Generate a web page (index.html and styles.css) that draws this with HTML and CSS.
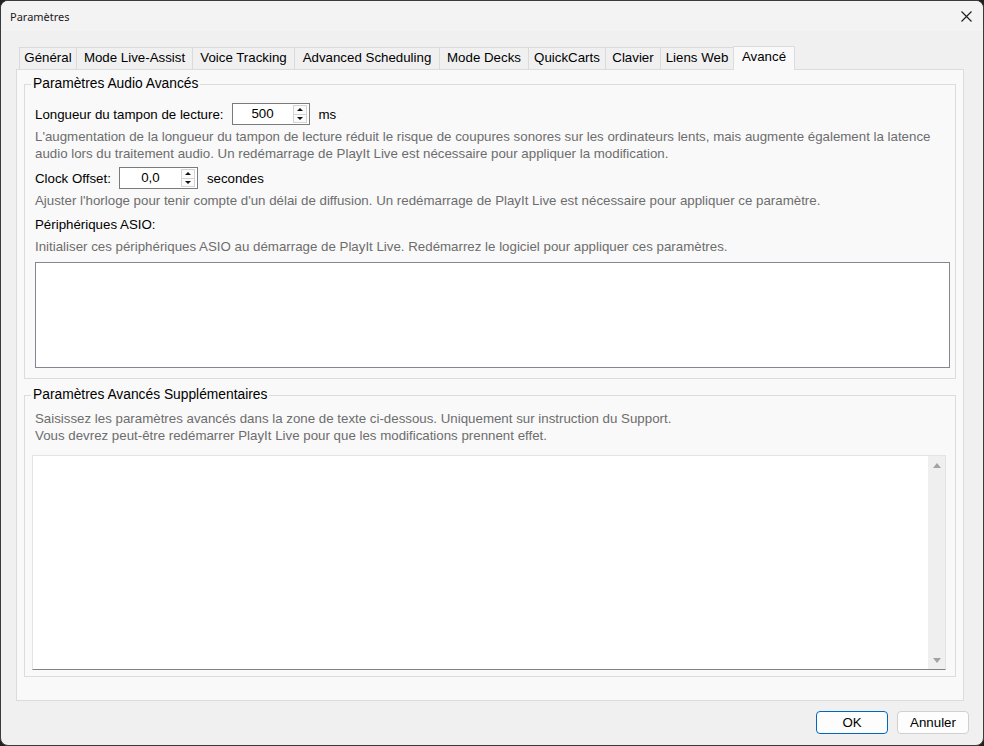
FILE: index.html
```html
<!DOCTYPE html>
<html lang="fr">
  <head>
    <meta charset="UTF-8" />
    <title>Paramètres</title>
    <link rel="stylesheet" href="styles.css">
  </head>
  <body>
    <div class="window">
      <div class="titlebar">
        <span class="title">Paramètres</span>
        <svg class="close" width="11" height="11" viewBox="0 0 11 11">
          <path d="M0.5 0.5 L10.5 10.5 M10.5 0.5 L0.5 10.5" stroke="#1b1b1b" stroke-width="1.1" fill="none" />
        </svg>
      </div>

      <div class="content">
        <div class="tabs">
          <div class="tab tab-general">Général</div>
          <div class="tab tab-live">Mode Live-Assist</div>
          <div class="tab tab-voice">Voice Tracking</div>
          <div class="tab tab-sched">Advanced Scheduling</div>
          <div class="tab tab-decks">Mode Decks</div>
          <div class="tab tab-carts">QuickCarts</div>
          <div class="tab tab-keys">Clavier</div>
          <div class="tab tab-links">Liens Web</div>
          <div class="tab tab-active">Avancé</div>
        </div>

        <div class="panel">
          <fieldset class="group group-audio">
            <legend>Paramètres Audio Avancés</legend>

            <div class="row row-buffer">
              <span class="label">Longueur du tampon de lecture:</span>
              <div class="spin spin-buffer">
                <span class="spin-value">500</span>
                <div class="spin-btns">
                  <span class="spin-btn"><i class="arrow-up"></i></span>
                  <span class="spin-btn"><i class="arrow-down"></i></span>
                </div>
              </div>
              <span class="unit">ms</span>
            </div>
            <p class="hint hint-buffer">L'augmentation de la longueur du tampon de lecture réduit le risque de coupures sonores sur les ordinateurs lents, mais augmente également la latence<br>audio lors du traitement audio. Un redémarrage de PlayIt Live est nécessaire pour appliquer la modification.</p>

            <div class="row row-clock">
              <span class="label">Clock Offset:</span>
              <div class="spin spin-clock">
                <span class="spin-value">0,0</span>
                <div class="spin-btns">
                  <span class="spin-btn"><i class="arrow-up"></i></span>
                  <span class="spin-btn"><i class="arrow-down"></i></span>
                </div>
              </div>
              <span class="unit">secondes</span>
            </div>
            <p class="hint hint-clock">Ajuster l'horloge pour tenir compte d'un délai de diffusion. Un redémarrage de PlayIt Live est nécessaire pour appliquer ce paramètre.</p>

            <div class="asio-label">Périphériques ASIO:</div>
            <p class="hint hint-asio">Initialiser ces périphériques ASIO au démarrage de PlayIt Live. Redémarrez le logiciel pour appliquer ces paramètres.</p>
            <div class="listbox"></div>
          </fieldset>

          <fieldset class="group group-extra">
            <legend>Paramètres Avancés Supplémentaires</legend>
            <p class="hint hint-extra">Saisissez les paramètres avancés dans la zone de texte ci-dessous. Uniquement sur instruction du Support.<br>Vous devrez peut-être redémarrer PlayIt Live pour que les modifications prennent effet.</p>
            <div class="textbox">
              <div class="textbox-area"></div>
              <div class="scrollbar">
                <i class="scroll-up"></i>
                <i class="scroll-down"></i>
              </div>
            </div>
          </fieldset>
        </div>
      </div>

      <div class="footer">
        <button class="btn btn-default">OK</button>
        <button class="btn">Annuler</button>
      </div>
    </div>
  </body>
</html>
```

FILE: styles.css
```css
html, body {
  margin: 0;
  padding: 0;
  background: #202020;
}

body {
  font-family: "Liberation Sans", Arial, sans-serif;
  font-size: 13.3px;
  color: #000;
}

.window {
  width: 984px;
  height: 746px;
  box-sizing: border-box;
  border: 1px solid #3a3a3a;
  border-radius: 8px;
  background: #f0f0f0;
  overflow: hidden;
  display: flex;
  flex-direction: column;
}

.titlebar {
  height: 30px;
  flex: none;
  background: #f3f3f3;
  display: flex;
  align-items: center;
  justify-content: space-between;
  padding: 0 11px 0 9px;
}

.title {
  font-family: "Noto Sans", sans-serif;
  font-size: 11px;
  color: #1a1a1a;
}

.close {
  display: block;
}

.content {
  padding: 15px 19px 0 15px;
}

/* tab strip */
.tabs {
  display: flex;
  align-items: flex-end;
  height: 24px;
  padding-left: 3px;
  margin-bottom: -1px;
  position: relative;
}

.tab {
  flex: none;
  height: 22px;
  box-sizing: border-box;
  margin-bottom: 1px;
  border-top: 1px solid #dadada;
  border-right: 1px solid #dadada;
  line-height: 20px;
  text-align: center;
  background: #f0f0f0;
  white-space: nowrap;
}

.tab-general { width: 58px; border-left: 1px solid #dadada; }
.tab-live { width: 116px; }
.tab-voice { width: 102px; }
.tab-sched { width: 145px; }
.tab-decks { width: 89px; }
.tab-carts { width: 77px; }
.tab-keys { width: 55px; }
.tab-links { width: 73px; }

.tab-active {
  width: 62px;
  height: 24px;
  margin-bottom: 0;
  margin-left: -1px;
  background: #f9f9f9;
  border-left: 1px solid #dcdcdc;
  border-top-color: #dcdcdc;
  border-right-color: #dcdcdc;
}

.panel {
  height: 632px;
  box-sizing: border-box;
  border: 1px solid #dcdcdc;
  background: #f9f9f9;
  padding: 0 7px;
}

/* group boxes */
.group {
  margin: 6px 0 0;
  padding: 0 5px 10px 10px;
  border: 1px solid #dcdcdc;
  min-width: 0;
}

.group legend {
  padding: 0 2px;
  margin-left: -4px;
  line-height: 16px;
  font-size: 13.8px;
}

.group-extra {
  margin-top: 8px;
  padding-bottom: 6px;
}

.row {
  display: flex;
  align-items: center;
  height: 22px;
}

.row-buffer {
  margin-top: 11px;
}

.row-clock {
  margin-top: 5px;
}

.spin {
  display: flex;
  height: 22px;
  box-sizing: border-box;
  border: 1px solid #7a7a7a;
  background: #fff;
  margin-left: 8px;
}

.spin-buffer {
  width: 78px;
}

.spin-clock {
  width: 79px;
}

.spin-value {
  flex: 1;
  text-align: center;
  line-height: 20px;
}

.spin-btns {
  width: 14px;
  margin: 1px 2px 1px 0;
  display: flex;
  flex-direction: column;
}

.spin-btn {
  flex: 1;
  border: 1px solid #d4d4d4;
  background: #fbfbfb;
  display: flex;
  align-items: center;
  justify-content: center;
}

.spin-btn + .spin-btn {
  border-top: none;
}

.arrow-up, .arrow-down {
  width: 0;
  height: 0;
  border-left: 3px solid transparent;
  border-right: 3px solid transparent;
}

.arrow-up {
  border-bottom: 3px solid #111;
}

.arrow-down {
  border-top: 3px solid #111;
}

.unit {
  margin-left: 9px;
}

.hint {
  margin: 3px 0 0;
  color: #6d6d6d;
  line-height: 17px;
  white-space: nowrap;
}

.asio-label {
  margin-top: 7px;
  line-height: 17px;
}

.hint-asio {
  margin-top: 5px;
}

.listbox {
  margin-top: 7px;
  height: 106px;
  box-sizing: border-box;
  border: 1px solid #828790;
  background: #fff;
}

.hint-extra {
  margin-top: 7px;
}

.textbox {
  display: flex;
  height: 215px;
  box-sizing: border-box;
  margin: 11px 4px 0 -3px;
  border: 1px solid #e3e3e3;
  border-bottom-color: #828282;
  background: #fff;
}

.textbox-area {
  flex: 1;
}

.scrollbar {
  width: 17px;
  background: #efefef;
  display: flex;
  flex-direction: column;
  justify-content: space-between;
  align-items: center;
  padding: 7px 0 6px;
}

.scroll-up, .scroll-down {
  width: 0;
  height: 0;
  border-left: 4px solid transparent;
  border-right: 4px solid transparent;
}

.scroll-up {
  border-bottom: 5px solid #a3a3a3;
}

.scroll-down {
  border-top: 5px solid #a3a3a3;
}

/* dialog buttons */
.footer {
  display: flex;
  justify-content: flex-end;
  gap: 9px;
  padding: 10px 14px 0 0;
}

.btn {
  width: 72px;
  height: 23px;
  border: 1px solid #d0d0d0;
  border-radius: 4px;
  background: #fdfdfd;
  font-family: "Liberation Sans", Arial, sans-serif;
  font-size: 13.3px;
  color: #000;
  padding: 0;
}

.btn-default {
  border-color: #0067c0;
}
```
